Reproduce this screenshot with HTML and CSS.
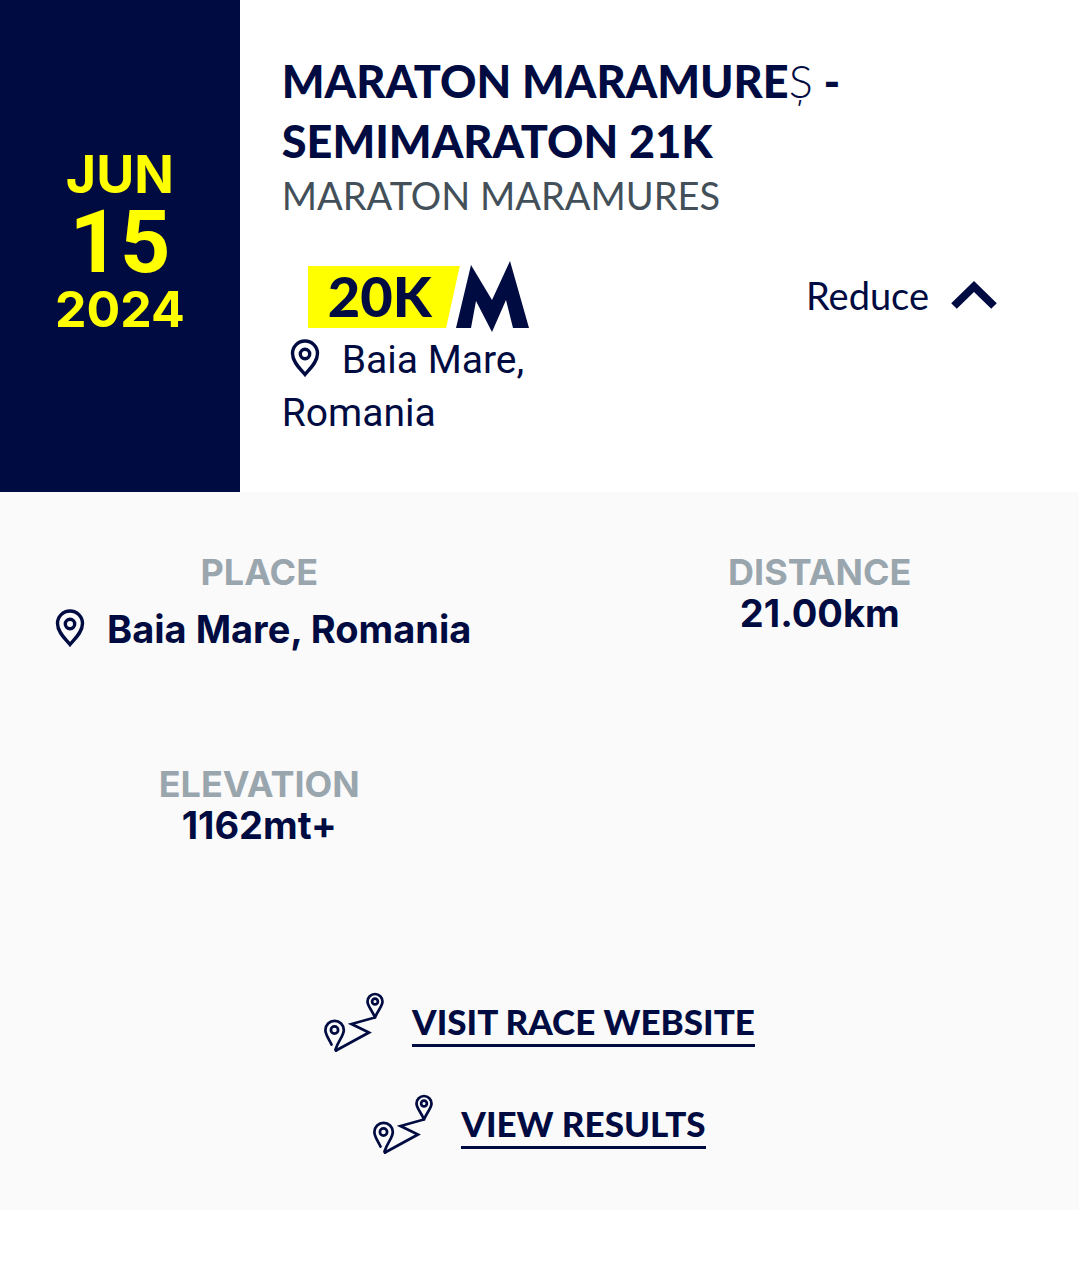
FILE: index.html
```html
<!DOCTYPE html>
<html lang="en">
<head>
<meta charset="utf-8">
<meta name="viewport" content="width=device-width, initial-scale=1">
<title>Maraton Maramureș - Semimaraton 21K</title>
<link rel="stylesheet" href="styles.css">
</head>
<body>
<svg class="sprite" aria-hidden="true">
  <symbol id="pin" viewBox="0 0 30 40">
    <path d="M15 35.500C11 30.500 2.500 23.500 2.500 14.500a12.500 12.500 0 0 1 25 0C27.500 23.500 19 30.500 15 35.500z" fill="none" stroke="currentColor" stroke-width="3.400"/>
    <circle cx="15" cy="15" r="4.700" fill="none" stroke="currentColor" stroke-width="3.400"/>
  </symbol>
  <symbol id="route" viewBox="0 0 60 60">
    <g fill="none" stroke="currentColor" stroke-width="2.700" stroke-linecap="round" stroke-linejoin="miter">
      <path d="M51 25.500C48 18 43.500 14 43.500 9.500a7.500 7.500 0 0 1 15 0C58.500 14 54 18 51 25.500L27.500 32 45 40.500 12 58.500"/>
      <path d="M7.500 52.500C5 47 1.400 43 1.400 38a9.200 9.200 0 0 1 18.400 0C19.800 44 14.500 48 11.500 57.500L12 58.500"/>
      <circle cx="51" cy="9.500" r="2.900"/>
      <circle cx="10.500" cy="38" r="3.600"/>
    </g>
  </symbol>
</svg>
<article class="race">
  <header class="race-head">
    <time class="date" datetime="2024-06-15">
      <span class="month">JUN</span>
      <span class="day">15</span>
      <span class="year">2024</span>
    </time>
    <div class="summary">
      <h1 class="title">MARATON MARAMURE<span class="light">Ș</span> - SEMIMARATON 21K</h1>
      <p class="subtitle">MARATON MARAMURES</p>
      <div class="overview">
        <div class="facts">
          <div class="badges">
            <span class="badge">20K</span>
            <svg class="mark" viewBox="0 0 74 72" role="img" aria-label="Mountain category"><path d="M0 67L15 4 36 39 54 0 73 67H57L50 39 36 71 20 40 15 67z" fill="currentColor"/></svg>
          </div>
          <p class="where"><svg class="pin" aria-hidden="true"><use href="#pin"/></svg>Baia Mare, Romania</p>
        </div>
        <button class="toggle" type="button" aria-expanded="true">Reduce
          <svg class="chevron" viewBox="0 0 46 30" aria-hidden="true"><path d="M3 26L23 6.500 43 26" fill="none" stroke="currentColor" stroke-width="8"/></svg>
        </button>
      </div>
    </div>
  </header>
  <section class="details">
    <dl class="stats">
      <div class="stat"><dt>PLACE</dt><dd class="spot"><svg class="pin" aria-hidden="true"><use href="#pin"/></svg>Baia Mare, Romania</dd></div>
      <div class="stat"><dt>DISTANCE</dt><dd>21.00km</dd></div>
      <div class="stat"><dt>ELEVATION</dt><dd>1162mt+</dd></div>
    </dl>
    <nav class="links">
      <div class="link-row"><svg class="route" aria-hidden="true"><use href="#route"/></svg><a href="#website">VISIT RACE WEBSITE</a></div>
      <div class="link-row"><svg class="route" aria-hidden="true"><use href="#route"/></svg><a href="#results">VIEW RESULTS</a></div>
    </nav>
  </section>
</article>
</body>
</html>
```
FILE: styles.css
```css
* { box-sizing: border-box; }
body {
  margin: 0;
  background: #fff;
  color: #000b41;
  font-family: Lato, sans-serif;
}
h1, p, dl, dd { margin: 0; }
.sprite { display: none; }

.race-head {
  display: grid;
  grid-template-columns: 2fr 7fr;
}
.date {
  display: flex;
  flex-direction: column;
  align-items: center;
  justify-content: center;
  padding-bottom: 8px;
  background: #000b41;
  color: #ff0;
  font-family: Inter, sans-serif;
  font-weight: 700;
  font-size: 52px;
  line-height: 52px;
}
.day {
  font-family: Roboto, sans-serif;
  font-size: 88px;
  line-height: 82px;
}
.year { font-size: 50px; }
.summary { padding: 51px 42px 52px; }
.title {
  font-size: 45px;
  line-height: 60px;
  font-weight: 900;
}
.light { font-weight: 300; }
.subtitle {
  font-size: 38px;
  line-height: 48px;
  font-weight: 400;
  color: #435059;
}
.overview {
  display: grid;
  grid-template-columns: 1fr 1fr;
  align-items: start;
  padding-top: 42px;
}
.badges {
  display: flex;
  align-items: flex-end;
  height: 72px;
  padding-left: 26px;
}
.badge {
  width: 152px;
  margin-bottom: 5px;
  padding-left: 20px;
  background: #ff0;
  clip-path: polygon(0 0, 100% 0, 91% 100%, 0 100%);
  font-size: 56px;
  line-height: 60px;
  padding-bottom: 2px;
  font-weight: 900;
}
.mark {
  width: 74px;
  height: 72px;
  margin-left: -4px;
}
.where {
  padding-top: 1px;
  font-family: Roboto, sans-serif;
  font-size: 39px;
  line-height: 53px;
}
.pin {
  width: 30px;
  height: 40px;
  margin: 0 22px 0 8px;
  vertical-align: -6px;
}
.toggle {
  display: flex;
  align-items: center;
  justify-self: end;
  gap: 22px;
  margin-right: 40px;
  padding: 8px 0;
  border: 0;
  background: none;
  color: inherit;
  font-family: inherit;
  font-size: 38px;
  line-height: 52px;
  cursor: pointer;
}
.chevron { width: 46px; height: 30px; }

.details {
  padding: 60px 0 56px;
  background: #fafafa;
}
.stats {
  display: grid;
  grid-template-columns: 1fr 1fr;
  column-gap: 42px;
  grid-auto-rows: 212px;
  font-family: Inter, sans-serif;
  font-size: 36px;
  line-height: 41px;
  font-weight: 700;
  text-align: center;
}
.stats dt { color: #9aa6ae; }
.stats dd { font-size: 38px; }
.stats .spot { line-height: 72px; }
.links {
  display: flex;
  flex-direction: column;
  gap: 42px;
  padding-top: 16px;
}
.link-row {
  display: flex;
  justify-content: center;
  align-items: center;
  gap: 28px;
}
.route { width: 60px; height: 60px; }
.links a {
  border-bottom: 3px solid;
  color: inherit;
  font-size: 35px;
  line-height: 46px;
  font-weight: 900;
  text-decoration: none;
}
```
